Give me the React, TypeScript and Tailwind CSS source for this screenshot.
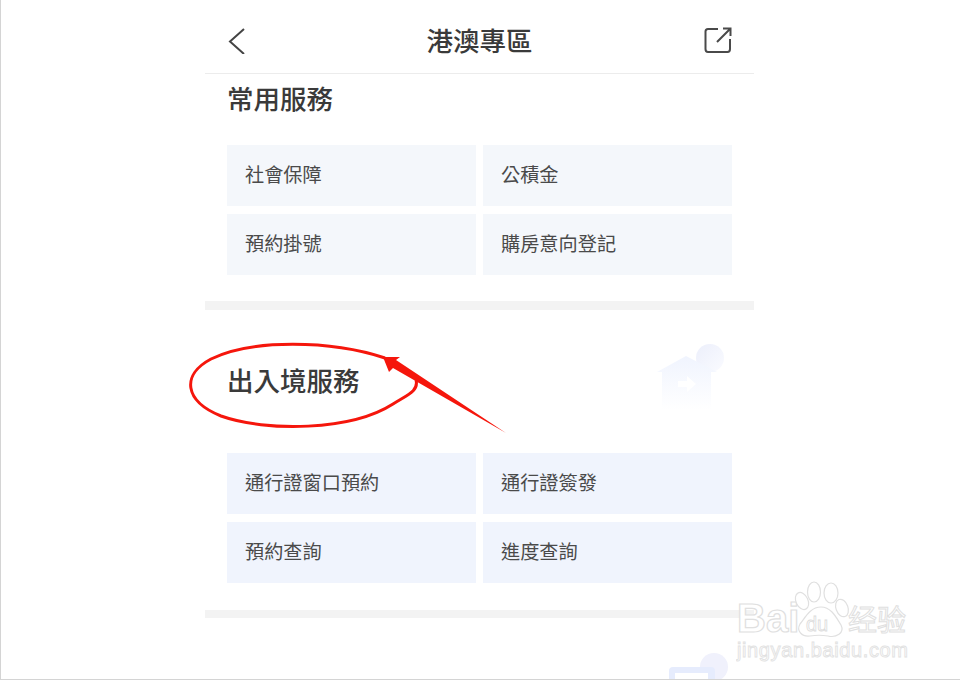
const commonServices = ['社會保障', '公積金', '預約掛號', '購房意向登記'];
const borderServices = ['通行證窗口預約', '通行證簽發', '預約查詢', '進度查詢'];

function ServiceGrid({ items, tint }: { items: string[]; tint: string }) {
  return (
    <div className="grid grid-cols-[249px_249px] gap-x-[7px] gap-y-2 px-[22px]">
      {items.map((label) => (
        <div key={label} className={`flex h-[61px] items-center px-[18px] pb-[3px] text-[19.2px] text-[#4a4a4a] ${tint}`}>
          {label}
        </div>
      ))}
    </div>
  );
}

function HouseIcon() {
  return (
    <svg className="absolute top-[34px] right-[24px]" width="76" height="72" viewBox="0 0 76 72">
      <defs>
        <linearGradient id="house" x1="0" y1="0" x2="0" y2="1">
          <stop offset="0" stopColor="#f0f4fe" />
          <stop offset="1" stopColor="#ffffff" />
        </linearGradient>
        <linearGradient id="sun" x1="0" y1="0" x2="1" y2="1">
          <stop offset="0" stopColor="#eceffb" />
          <stop offset="1" stopColor="#fafbff" />
        </linearGradient>
      </defs>
      <circle cx="56" cy="14" r="14" fill="url(#sun)" />
      <path d="M32 12 L63 28 L57 28 L57 66 L8 66 L8 28 L3 28 Z" fill="url(#house)" />
      <path d="M24 37 H33 V32 L42 40 L33 48 V43 H24 Z" fill="#ffffff" />
    </svg>
  );
}

function DocIcon() {
  return (
    <svg className="absolute top-[35px] right-[24px]" width="62" height="60" viewBox="0 0 62 60">
      <circle cx="46" cy="14" r="14" fill="#f0f1fc" />
      <path d="M1 18 Q1 14 5 14 H43 Q47 14 47 18 V60 H1 Z" fill="#e6ecfd" />
      <rect x="7" y="20" width="33" height="40" fill="#ffffff" />
    </svg>
  );
}

function Watermark() {
  return (
    <div className="absolute top-[575px] left-[735px]">
      <svg width="180" height="95" viewBox="0 0 180 95">
        <text x="1" y="57" fontFamily="Liberation Sans, sans-serif" fontSize="40" fontWeight="700" fill="#ffffff" stroke="#e0e0e0" strokeWidth="1.2">Bai</text>
        <g fill="#ffffff" stroke="#e0e0e0" strokeWidth="1.2">
          <ellipse cx="66" cy="26" rx="6" ry="9" transform="rotate(-25 66 26)" />
          <ellipse cx="78" cy="17" rx="6.5" ry="10" />
          <ellipse cx="95" cy="18" rx="7" ry="10" />
          <ellipse cx="106" cy="33" rx="6" ry="9" transform="rotate(-20 106 33)" />
          <path d="M85 32 C96 32 101 44 105 50 C109 58 100 63 92 61 C86 60 80 60 74 61 C66 62 60 56 64 49 C69 43 74 32 85 32 Z" />
        </g>
        <text x="70" y="56" fontFamily="Liberation Sans, sans-serif" fontSize="20" fill="#ffffff" stroke="#dcdcdc" strokeWidth="0.8">du</text>
        <text x="112" y="56" fontFamily="Noto Sans CJK SC, sans-serif" fontSize="29" fill="#ffffff" stroke="#e0e0e0" strokeWidth="1">经验</text>
        <text x="1" y="82" fontFamily="Liberation Sans, sans-serif" fontSize="20" textLength="171" fill="#ffffff" stroke="#e2e2e2" strokeWidth="0.9">jingyan.baidu.com</text>
      </svg>
    </div>
  );
}

function Annotation() {
  return (
    <svg className="absolute top-[335px] left-[180px]" width="340" height="110" viewBox="0 0 340 110">
      <path d="M204 23 C150 5 70 4 30 24 C0 40 3 66 40 81 C85 97 170 96 212 69 C226 60 238 56 235 45" fill="none" stroke="#f5160c" strokeWidth="3" />
      <path d="M202 22 L219 22 L215 25 L325 98 L212 33 L208 37 Z" fill="#f5160c" />
    </svg>
  );
}

export default function App() {
  return (
    <div className="relative h-[680px] w-[960px] overflow-hidden border-b border-l border-[#d4d4d4] bg-white font-['Noto_Sans_CJK_TC','Noto_Sans_CJK_SC',sans-serif]">
      <main className="ml-[204px] w-[549px]">
        <header className="flex h-[74px] items-center justify-between border-b border-[#ececec] px-[22px] pt-[7px]">
          <svg width="28" height="28" viewBox="0 0 28 28" fill="none" stroke="#444444" strokeWidth="2">
            <path d="M17 3 L3 15.5 L17 28" />
          </svg>
          <h1 className="text-[26.5px] font-medium text-[#3a3a3a]">港澳專區</h1>
          <svg width="28" height="26" viewBox="0 0 28 26" fill="none" stroke="#4a4a4a" strokeWidth="2">
            <path d="M14 2 H4 Q1.5 2 1.5 4.5 V22 Q1.5 25 4 25 H23.5 Q26 25 26 22 V12" />
            <path d="M13 15 L26 2 M19 1.5 H26.5 V9" />
          </svg>
        </header>

        <section className="pt-1.5">
          <h2 className="mb-[29px] h-9 pl-[22px] text-[26.5px] leading-9 font-medium text-[#3a3a3a]">常用服務</h2>
          <ServiceGrid items={commonServices} tint="bg-[#f4f7fb]" />
        </section>
        <div className="mt-[26px] h-[9px] bg-[#f3f3f3]" />

        <section className="relative pt-[52px]">
          <HouseIcon />
          <h2 className="mb-[55px] h-9 pl-[22px] text-[26.5px] leading-9 font-medium text-[#3a3a3a]">出入境服務</h2>
          <ServiceGrid items={borderServices} tint="bg-[#f0f4fd]" />
        </section>
        <div className="mt-[27px] h-2 bg-[#f3f3f3]" />

        <section className="relative pt-[55px]">
          <DocIcon />
          <h2 className="h-9 pl-[22px] text-[26.5px] leading-9 font-medium text-[#3a3a3a]">便民服務</h2>
        </section>
      </main>

      <Annotation />
      <Watermark />
    </div>
  );
}
